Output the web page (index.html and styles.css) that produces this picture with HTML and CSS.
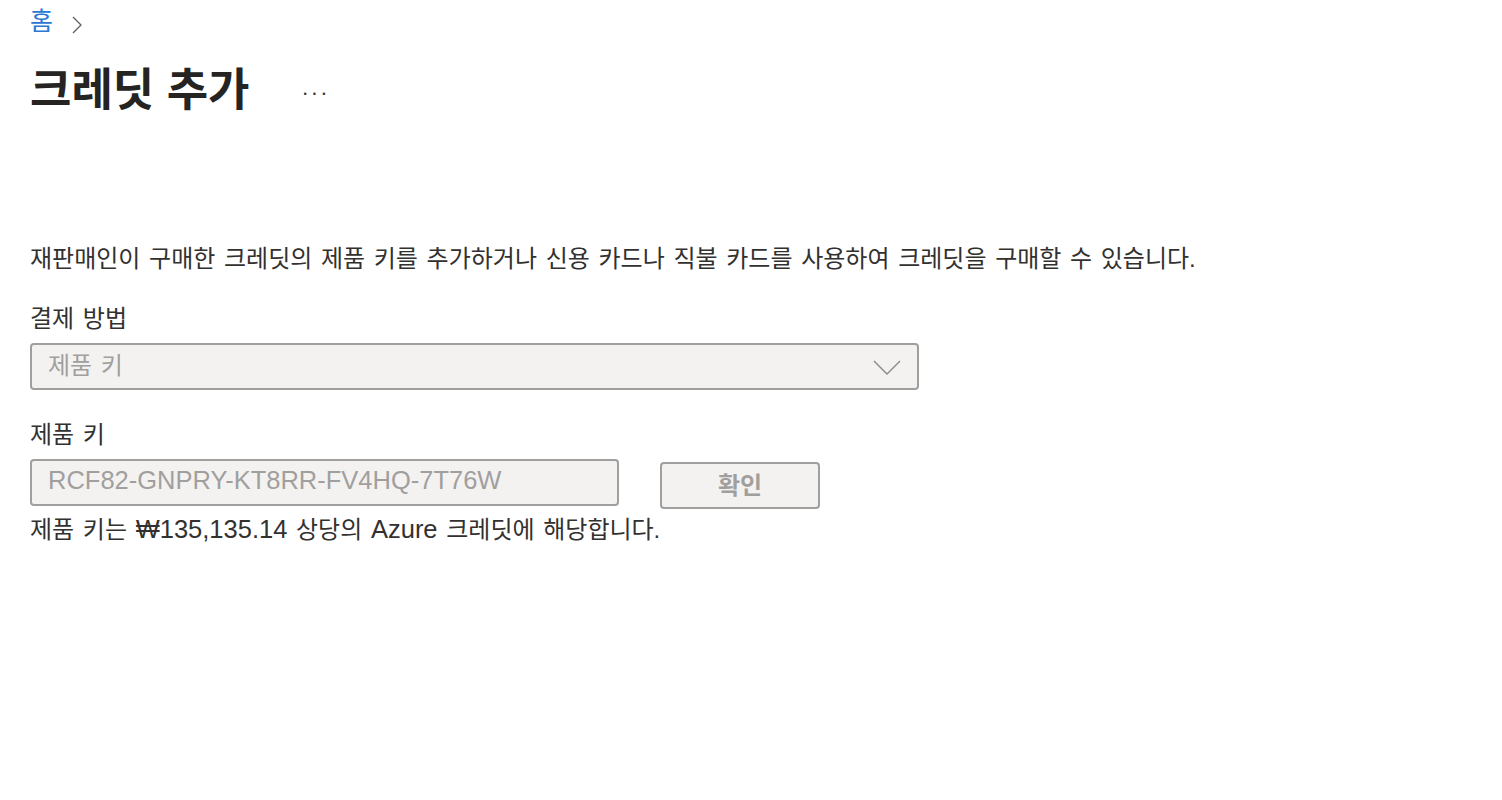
FILE: index.html
```html
<!DOCTYPE html>
<html lang="ko">
<head>
<meta charset="utf-8">
<title>크레딧 추가</title>
<link rel="stylesheet" href="styles.css">
</head>
<body>
<div class="page">
  <nav class="breadcrumb">
    <a class="crumb" href="#">홈</a>
    <svg class="crumb-sep" width="12" height="20" viewBox="0 0 12 20"><path d="M2 2 L10 10 L2 18" fill="none" stroke="#605e5c" stroke-width="1.3"/></svg>
  </nav>
  <header class="title-row">
    <h1 class="title">크레딧 추가</h1>
    <span class="more">···</span>
  </header>
  <p class="desc">재판매인이 구매한 크레딧의 제품 키를 추가하거나 신용 카드나 직불 카드를 사용하여 크레딧을 구매할 수 있습니다.</p>
  <div class="field">
    <label class="label">결제 방법</label>
    <div class="select">
      <span class="select-text">제품 키</span>
      <svg class="chev" width="28" height="16" viewBox="0 0 28 16"><path d="M1 2 L14 15 L27 2" fill="none" stroke="#8a8886" stroke-width="1.4"/></svg>
    </div>
  </div>
  <div class="field">
    <label class="label">제품 키</label>
    <div class="key-row">
      <div class="input">RCF82-GNPRY-KT8RR-FV4HQ-7T76W</div>
      <button class="btn">확인</button>
    </div>
    <p class="note">제품 키는 <span class="latin">₩135,135.14</span> 상당의 <span class="latin">Azure</span> 크레딧에 해당합니다.</p>
  </div>
</div>
</body>
</html>
```

FILE: styles.css
```css
html, body {
  margin: 0;
  padding: 0;
  background: #ffffff;
}
body {
  font-family: "Liberation Sans", "Noto Sans CJK KR", sans-serif;
  color: #323130;
}
.page {
  padding: 4px 30px 0 30px;
}
.breadcrumb {
  display: flex;
  align-items: center;
  gap: 18px;
  height: 38px;
}
.crumb {
  color: #2a78d4;
  text-decoration: none;
  font-size: 25px;
  line-height: 30px;
  margin-top: -4px;
}
.crumb-sep {
  margin-top: 4px;
}
.title-row {
  display: flex;
  align-items: center;
  height: 100px;
  margin-top: -6px;
}
.title {
  margin: 0;
  font-size: 45px;
  font-weight: 700;
  color: #252423;
}
.more {
  margin-left: 52px;
  padding-top: 14px;
  font-size: 22px;
  color: #323130;
  letter-spacing: 2px;
}
.desc {
  margin: 107px 0 0 0;
  font-size: 24px;
  line-height: 32px;
  word-spacing: 2px;
}
.field {
  margin-top: 28px;
}
.field + .field {
  margin-top: 29px;
}
.label {
  display: block;
  font-size: 24px;
  line-height: 32px;
  word-spacing: 2px;
}
.select {
  margin-top: 8px;
  box-sizing: border-box;
  width: 889px;
  height: 47px;
  border: 2px solid #a19f9d;
  border-radius: 4px;
  background: #f3f2f1;
  display: flex;
  align-items: center;
  justify-content: space-between;
  padding: 0 16px 0 16px;
}
.select-text {
  font-size: 24px;
  color: #a19f9d;
  word-spacing: 2px;
  margin-top: -6px;
}
.key-row {
  margin-top: 8px;
  display: flex;
  align-items: flex-start;
  gap: 41px;
}
.input {
  box-sizing: border-box;
  width: 589px;
  height: 47px;
  border: 2px solid #a19f9d;
  border-radius: 4px;
  background: #f3f2f1;
  padding: 0 16px 4px 16px;
  display: flex;
  align-items: center;
  font-size: 25.5px;
  color: #a19f9d;
}
.btn {
  box-sizing: border-box;
  margin-top: 3px;
  width: 160px;
  height: 47px;
  border: 2px solid #a19f9d;
  border-radius: 4px;
  background: #f3f2f1;
  font-family: "Noto Sans CJK KR", sans-serif;
  font-size: 24px;
  font-weight: 700;
  color: #a19f9d;
  padding: 0 0 4px 0;
}
.note {
  margin: 4px 0 0 0;
  font-size: 24px;
  line-height: 32px;
  word-spacing: 2px;
}
.latin {
  font-size: 25.5px;
}
```
